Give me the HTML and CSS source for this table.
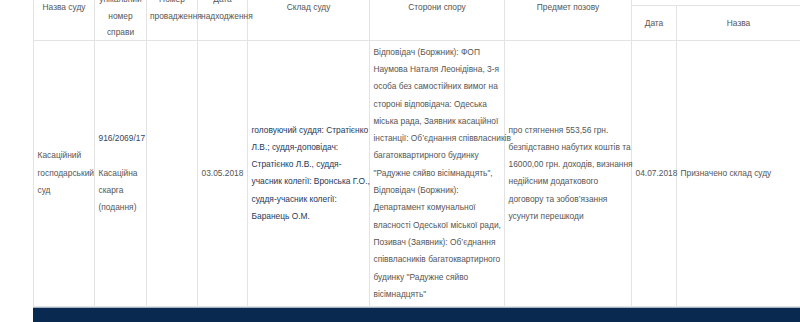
FILE: index.html
```html
<!DOCTYPE html>
<html lang="uk">
<head>
<meta charset="utf-8">
<title>Справи</title>
<link rel="stylesheet" href="styles.css">
</head>
<body>
<div class="page">
  <table class="cases">
    <colgroup>
      <col class="c-court">
      <col class="c-num">
      <col class="c-proc">
      <col class="c-date">
      <col class="c-judges">
      <col class="c-parties">
      <col class="c-subject">
      <col class="c-sdate">
      <col class="c-sname">
    </colgroup>
    <thead>
      <tr>
        <th rowspan="2">Назва суду</th>
        <th rowspan="2">Єдиний унікальний номер справи</th>
        <th rowspan="2">Номер провадження</th>
        <th rowspan="2">Дата надходження</th>
        <th rowspan="2">Склад суду</th>
        <th rowspan="2">Сторони спору</th>
        <th rowspan="2">Предмет позову</th>
        <th colspan="2" class="group">Стан розгляду</th>
      </tr>
      <tr>
        <th class="sub">Дата</th>
        <th class="sub">Назва</th>
      </tr>
    </thead>
    <tbody>
      <tr>
        <td class="lines">Касаційний<br>господарський<br>суд</td>
        <td class="lines"><span class="case-no">916/2069/17</span><br><br>Касаційна<br>скарга<br>(подання)</td>
        <td></td>
        <td>03.05.2018</td>
        <td class="lines judges">головуючий суддя: Стратієнко<br>Л.В.; суддя-доповідач:<br>Стратієнко Л.В., суддя-<br>учасник колегії: Вронська Г.О.,<br>суддя-учасник колегії:<br>Баранець О.М.</td>
        <td class="lines">Відповідач (Боржник): ФОП<br>Наумова Наталя Леонідівна, 3-я<br>особа без самостійних вимог на<br>стороні відповідача: Одеська<br>міська рада, Заявник касаційної<br>інстанції: Об’єднання співвласників<br>багатоквартирного будинку<br>"Радужне сяйво вісімнадцять",<br>Відповідач (Боржник):<br>Департамент комунальної<br>власності Одеської міської ради,<br>Позивач (Заявник): Об’єднання<br>співвласників багатоквартирного<br>будинку "Радужне сяйво<br>вісімнадцять"</td>
        <td class="lines">про стягнення 553,56 грн.<br>безпідставно набутих коштів та<br>16000,00 грн. доходів, визнання<br>недійсним додаткового<br>договору та зобов’язання<br>усунути перешкоди</td>
        <td>04.07.2018</td>
        <td>Призначено склад суду</td>
      </tr>
    </tbody>
  </table>
  <div class="footer"></div>
</div>
</body>
</html>
```

FILE: styles.css
```css
html, body {
  margin: 0;
  padding: 0;
  overflow: hidden;
  background: #fff;
}

.page {
  padding-left: 33px;
  font-family: "Liberation Sans", Arial, sans-serif;
  font-size: 8.4px;
  color: #555;
}

.cases {
  margin-top: -26px;
  width: 767px;
  table-layout: fixed;
  border-collapse: collapse;
}

.c-court { width: 61px; }
.c-num { width: 52px; }
.c-proc { width: 51px; }
.c-date { width: 50px; }
.c-judges { width: 122px; }
.c-parties { width: 135px; }
.c-subject { width: 127px; }
.c-sdate { width: 45px; }
.c-sname { width: 124px; }

.cases th,
.cases td {
  border: 1px solid #e3e3e3;
  vertical-align: middle;
}

.cases th {
  font-weight: normal;
  text-align: center;
  line-height: 16.3px;
  padding: 0 3px;
}

.cases th.sub {
  height: 35px;
  box-sizing: border-box;
}

.cases td {
  line-height: 17.3px;
  padding: 2.5px 3px 2.5px 3.5px;
  text-align: left;
}

.cases td.lines {
  white-space: nowrap;
}

.cases td.judges {
  color: #24395a;
}

.case-no {
  color: #34465f;
}

.footer {
  height: 24px;
  background: #0a2950;
  border-top: 1px solid #a3b3c6;
}
```
